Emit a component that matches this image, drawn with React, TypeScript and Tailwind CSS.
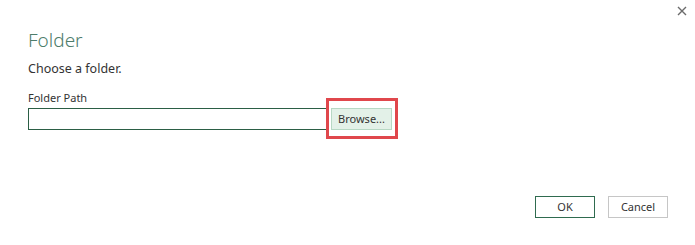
import React from 'react'

function CloseIcon() {
  return (
    <svg width="10" height="10" viewBox="0 0 10 10" className="text-[#6b6b6b]">
      <path d="M1 1 L9 9 M9 1 L1 9" stroke="currentColor" strokeWidth="1.4" />
    </svg>
  )
}

export default function App() {
  return (
    <div className="flex h-[245px] w-[695px] flex-col bg-white font-['Noto_Sans',sans-serif] text-[#333]">
      <div className="flex justify-end pt-[6px] pr-[8px]">
        <button className="flex h-[10px] w-[10px] items-center justify-center">
          <CloseIcon />
        </button>
      </div>

      <div className="flex flex-col pl-[28px]">
        <h1 className="mt-[12px] text-[19px] leading-[24px] font-light text-[#4e7d6b]">Folder</h1>
        <p className="mt-[9px] text-[12.5px] leading-[16px]">Choose a folder.</p>
        <label className="mt-[14px] text-[11px] leading-[14px]">Folder Path</label>
        <div className="mt-[3px] flex items-center gap-[3px]">
          <input className="h-[22px] w-[300px] border border-[#2b5e45] px-1 text-[11px] outline-none" />
          <div className="relative">
            <button className="flex h-[22px] w-[61px] items-center justify-center border border-[#b7d8c4] bg-[#e3f1e8] text-[11px] text-[#333]">
              Browse...
            </button>
            <div className="pointer-events-none absolute -top-[10px] -right-[6px] -bottom-[9px] -left-[5px] border-[3px] border-[#e0474c]" />
          </div>
        </div>
      </div>

      <div className="mt-[66px] flex justify-end gap-[13px] pr-[27px]">
        <button className="flex h-[22px] w-[60px] items-center justify-center border border-[#2f6b4f] bg-white text-[11px]">
          OK
        </button>
        <button className="flex h-[22px] w-[60px] items-center justify-center border border-[#c6c6c6] bg-white text-[11px]">
          Cancel
        </button>
      </div>
    </div>
  )
}
